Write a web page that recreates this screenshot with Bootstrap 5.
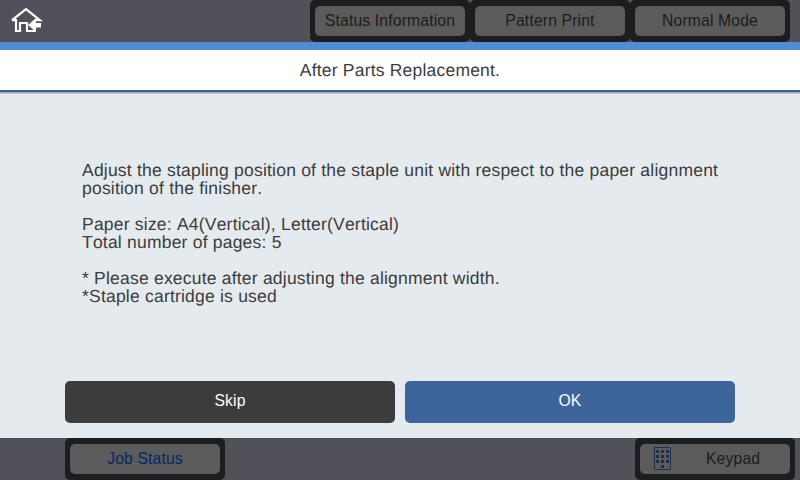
<!DOCTYPE html>
<html lang="en">
<head>
<meta charset="utf-8">
<meta name="viewport" content="width=device-width, initial-scale=1">
<title>After Parts Replacement</title>
<link href="https://cdn.jsdelivr.net/npm/bootstrap@5.3.0/dist/css/bootstrap.min.css" rel="stylesheet">
<style>
body { width: 800px; height: 480px; background: #51515a; color: #3c3c3c; font: 17.5px/18px "Liberation Sans", Arial, sans-serif; text-rendering: geometricPrecision; font-kerning: none; }
.bar { height: 42px; flex: none; }
.top-keys { margin-right: 10px; }
.bottom-bar { padding: 0 5px 0 65px; }
.panel-key { width: 160px; height: 42px; padding: 6px 5px; background: #1c1d1e; border: 0; border-radius: 5px; font-size: 15.7px; color: #1c1c1c; letter-spacing: .16px; }
.key-face { height: 30px; padding-bottom: 1px; border-radius: 5px; background: #5b5b5b; }
.job-face { color: #032768; }
.dialog-title { height: 50px; border-top: 8px solid #4f8dd3; border-bottom: 2px solid #35628f; box-shadow: 0 1px 0 #a5a5a2, 0 2px 0 #c9cbc9; font-size: 17.5px; line-height: 18px; letter-spacing: .2px; }
.dialog-body { background: #e5eaee; padding: 69px 65px 15px; }
.message { padding-left: 17px; letter-spacing: .21px; white-space: pre; }
.action { width: 330px; height: 42px; border: 0; border-radius: 5px; font-size: 15.7px; line-height: 18px; color: #fff; letter-spacing: .16px; padding: 0 0 2px; }
.action-skip { background: #3c3c3c; }
.action-ok { background: #3d649b; }
.home-icon { margin: 7px 0 0 10px; }
.keypad-icon { margin: 0 35px 0 14px; }
</style>
</head>
<body class="d-flex flex-column overflow-hidden">
<header class="bar d-flex justify-content-between">
  <svg class="home-icon" width="33" height="26" viewBox="0 0 33 26" aria-label="Home">
    <path d="M2 13.2 16 2.2 30 13.2H25.5M2 13.2H6V24H10V16H17V24H24.5V22" fill="none" stroke="#fff" stroke-width="2.2"/>
    <path d="M18 18 26 11V16H31V20.5H26V25Z" fill="#fff"/>
  </svg>
  <div class="top-keys d-flex">
    <button class="panel-key"><span class="key-face d-flex align-items-center justify-content-center">Status Information</span></button>
    <button class="panel-key"><span class="key-face d-flex align-items-center justify-content-center">Pattern Print</span></button>
    <button class="panel-key"><span class="key-face d-flex align-items-center justify-content-center">Normal Mode</span></button>
  </div>
</header>
<h1 class="dialog-title bg-white d-flex align-items-center justify-content-center m-0 fw-normal flex-shrink-0 position-relative">After Parts Replacement.</h1>
<main class="dialog-body flex-grow-1 d-flex flex-column justify-content-between">
<div class="message">Adjust the stapling position of the staple unit with respect to the paper alignment
position of the finisher.

Paper size: A4(Vertical), Letter(Vertical)
Total number of pages: 5

* Please execute after adjusting the alignment width.
*Staple cartridge is used</div>
  <div class="d-flex justify-content-between">
    <button class="btn action action-skip">Skip</button>
    <button class="btn action action-ok">OK</button>
  </div>
</main>
<footer class="bar bottom-bar d-flex justify-content-between">
  <button class="panel-key"><span class="key-face job-face d-flex align-items-center justify-content-center">Job Status</span></button>
  <button class="panel-key"><span class="key-face d-flex align-items-center">
    <svg class="keypad-icon" width="17" height="23" viewBox="0 0 17 23" aria-hidden="true">
      <rect x=".5" y=".5" width="16" height="22" rx=".5" fill="none" stroke="#1b304b"/>
      <path d="M2 3h3v3H2zM7 3h3v3H7zM12 3h3v3h-3zM2 8h3v3H2zM7 8h3v3H7zM12 8h3v3h-3zM2 13h3v3H2zM7 13h3v3H7zM12 13h3v3h-3zM7 18h3v3H7z" fill="#1b304b"/>
    </svg>Keypad</span></button>
</footer>
<script src="https://cdn.jsdelivr.net/npm/bootstrap@5.3.0/dist/js/bootstrap.bundle.min.js"></script>
</body>
</html>
